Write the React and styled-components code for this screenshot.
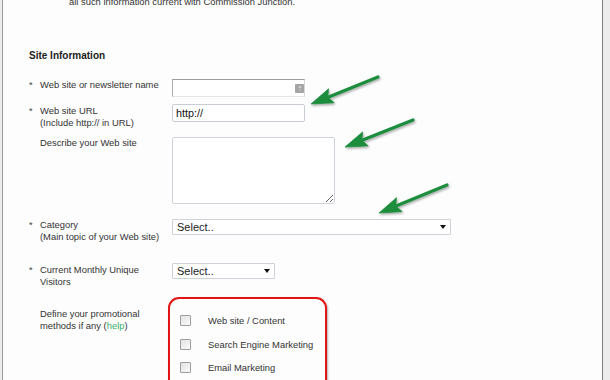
import styled, { createGlobalStyle } from "styled-components";

const GlobalStyle = createGlobalStyle`
  body {
    margin: 0;
    background: #ffffff;
    font-family: "Liberation Sans", Arial, sans-serif;
    overflow: hidden;
  }
`;

const Page = styled.div`
  position: relative;
  display: flex;
  width: 610px;
  height: 380px;
  overflow: hidden;
  background: #ededed;
`;

const Frame = styled.div`
  margin-left: 2px;
  width: 601px;
  height: 380px;
  background: #fdfdfd;
  border-left: 1px solid #9a9a9a;
  border-right: 1px solid #808080;
  padding-left: 26px;
  box-sizing: border-box;
`;

const Note = styled.p`
  margin: -4px 0 0 40px;
  font-size: 9.4px;
  line-height: 12px;
  color: #333;
`;

const SectionTitle = styled.h3`
  margin: 42px 0 0 0;
  font-size: 10px;
  line-height: 12px;
  font-weight: bold;
  color: #222;
`;

const Row = styled.div`
  display: grid;
  grid-template-columns: 11px 132px 1fr;
  align-items: start;
  margin-top: ${(p) => p.$mt}px;
`;

const Star = styled.span`
  font-size: 9.4px;
  line-height: 12px;
  color: #444;
  padding-top: ${(p) => p.$pt || 0}px;
`;

const Label = styled.div`
  font-size: 9.4px;
  line-height: 12px;
  color: #333;
  padding-top: ${(p) => p.$pt || 0}px;
`;

const Help = styled.a`
  color: #36b36a;
  text-decoration: none;
`;

const Field = styled.div`
  position: relative;
  display: flex;
`;

const TextInput = styled.input`
  box-sizing: border-box;
  width: ${(p) => p.$w}px;
  height: 18px;
  margin: 0;
  padding: 0 3px;
  border: 1px solid #c9ccd3;
  border-radius: 2px;
  background: #fff;
  font-family: "Liberation Sans", Arial, sans-serif;
  font-size: 10.8px;
  color: #111;
  outline: none;

  &.inset {
    border-color: #9c9c9c #d8d8d8 #e6e6e6 #b0b0b0;
    border-radius: 0;
  }
`;

const KeyIcon = styled.span`
  position: absolute;
  left: 123px;
  top: 5px;
  width: 9px;
  height: 9px;
  border-radius: 1px;
  background: #a4a4a4;
  color: #e8e8e8;
  font-size: 7px;
  line-height: 9px;
  text-align: center;
`;

const TextArea = styled.textarea`
  box-sizing: border-box;
  width: 163px;
  height: 67px;
  margin: 0;
  border: 1px solid #cfd3da;
  border-radius: 2px;
  background: #fff;
  outline: none;
`;

const SelectBox = styled.div`
  box-sizing: border-box;
  display: flex;
  align-items: center;
  justify-content: space-between;
  width: ${(p) => p.$w}px;
  height: 16px;
  padding: 0 4px 0 4px;
  border: 1px solid #cfd2d8;
  border-radius: 1px;
  background: #fff;
  font-size: 11px;
  color: #222;
`;

const Caret = styled.span`
  width: 0;
  height: 0;
  border-left: 3.5px solid transparent;
  border-right: 3.5px solid transparent;
  border-top: 4px solid #111;
`;

const MethodBox = styled.div`
  box-sizing: border-box;
  margin-left: -4px;
  width: 159px;
  height: 110px;
  padding: 10px 0 0 10px;
  border: 2px solid #e31414;
  border-radius: 11px;
  box-shadow: 1px 1px 2px rgba(0, 0, 0, 0.3);
`;

const CheckRow = styled.label`
  display: flex;
  align-items: center;
  gap: 17px;
  height: 23.5px;
  font-size: 9.4px;
  color: #333;
`;

const Check = styled.input`
  appearance: none;
  margin: 0;
  width: 11px;
  height: 11px;
  border: 1px solid #9d9d9d;
  border-radius: 1px;
  background: linear-gradient(135deg, #e2e2e2, #fbfbfb);
`;

const Overlay = styled.svg`
  position: absolute;
  left: 0;
  top: 0;
  pointer-events: none;
`;

function arrowParts(t, p) {
  const dx = p[0] - t[0];
  const dy = p[1] - t[1];
  const len = Math.hypot(dx, dy);
  const ux = dx / len;
  const uy = dy / len;
  const nx = -uy;
  const ny = ux;
  const hl = 22;
  const hw = 7.5;
  const bx = p[0] - ux * hl;
  const by = p[1] - uy * hl;
  return {
    shaft: `M${t[0]},${t[1]} L${bx + ux * 3},${by + uy * 3}`,
    head: `${p[0]},${p[1]} ${bx + nx * hw},${by + ny * hw} ${bx + ux * 4},${by + uy * 4} ${bx - nx * hw},${by - ny * hw}`,
  };
}

const arrows = [
  [[378, 77], [311, 104]],
  [[413, 120], [345, 147]],
  [[447, 185], [379, 213]],
];

const methods = ["Web site / Content", "Search Engine Marketing", "Email Marketing"];

export default function App() {
  return (
    <>
      <GlobalStyle />
      <Page>
        <Frame>
          <Note>all such information current with Commission Junction.</Note>
          <SectionTitle>Site Information</SectionTitle>

          <Row $mt={17}>
            <Star>*</Star>
            <Label>Web site or newsletter name</Label>
            <Field>
              <TextInput className="inset" $w={133} />
              <KeyIcon>⇡</KeyIcon>
            </Field>
          </Row>

          <Row $mt={7}>
            <Star $pt={1}>*</Star>
            <Label $pt={1}>
              Web site URL
              <br />
              (Include http:// in URL)
            </Label>
            <Field>
              <TextInput $w={133} defaultValue="http://" />
            </Field>
          </Row>

          <Row $mt={8}>
            <span />
            <Label>Describe your Web site</Label>
            <Field>
              <TextArea />
            </Field>
          </Row>

          <Row $mt={15}>
            <Star>*</Star>
            <Label>
              Category
              <br />
              (Main topic of your Web site)
            </Label>
            <Field>
              <SelectBox $w={279}>
                Select..
                <Caret />
              </SelectBox>
            </Field>
          </Row>

          <Row $mt={20}>
            <Star $pt={1}>*</Star>
            <Label $pt={1}>
              Current Monthly Unique
              <br />
              Visitors
            </Label>
            <Field>
              <SelectBox $w={103}>
                Select..
                <Caret />
              </SelectBox>
            </Field>
          </Row>

          <Row $mt={9}>
            <span />
            <Label $pt={11}>
              Define your promotional
              <br />
              methods if any (<Help href="#">help</Help>)
            </Label>
            <Field>
              <MethodBox>
                {methods.map((m) => (
                  <CheckRow key={m}>
                    <Check type="checkbox" />
                    {m}
                  </CheckRow>
                ))}
              </MethodBox>
            </Field>
          </Row>
        </Frame>

        <Overlay width="610" height="380" viewBox="0 0 610 380">
          <defs>
            <filter id="arrowShadow" x="-20%" y="-20%" width="140%" height="160%">
              <feDropShadow dx="1" dy="1.5" stdDeviation="1" floodColor="#000" floodOpacity="0.35" />
            </filter>
          </defs>
          {arrows.map(([t, p], i) => {
            const a = arrowParts(t, p);
            return (
              <g key={i} filter="url(#arrowShadow)" fill="#1d8c3e" stroke="#1d8c3e">
                <path d={a.shaft} strokeWidth="3.2" strokeLinecap="round" fill="none" />
                <polygon points={a.head} strokeWidth="0.8" strokeLinejoin="round" />
              </g>
            );
          })}
        </Overlay>
      </Page>
    </>
  );
}
